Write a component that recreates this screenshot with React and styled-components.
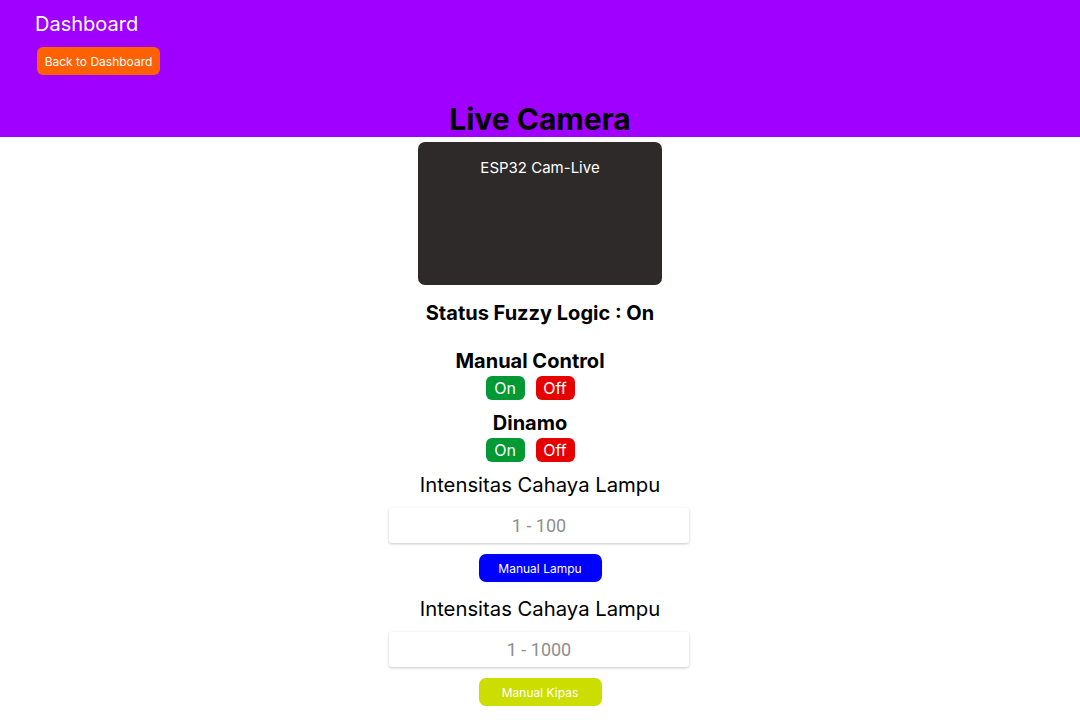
import React from 'react';
import styled, { createGlobalStyle } from 'styled-components';

const GlobalStyle = createGlobalStyle`
  html, body { margin: 0; padding: 0; background: #fff; }
  body { font-family: 'Inter', 'Liberation Sans', sans-serif; }
  * { box-sizing: border-box; }
`;

const Header = styled.header`
  background: #a000ff;
  height: 137px;
  display: flex;
  flex-direction: column;
  padding: 12px 0 0 35px;
`;

const Brand = styled.div`
  color: #fff;
  font-size: 20px;
  line-height: 24px;
`;

const BackButton = styled.button`
  align-self: flex-start;
  margin: 11px 0 0 2px;
  background: #ff6000;
  color: #fff;
  border: none;
  border-radius: 6px;
  height: 28px;
  width: 123px;
  padding: 0;
  font-family: inherit;
  font-size: 12px;
`;

const PageTitle = styled.h1`
  margin: auto 35px 0 0;
  text-align: center;
  font-size: 30px;
  line-height: 36px;
  font-weight: 700;
  color: #000;
`;

const Main = styled.main`
  display: flex;
  flex-direction: column;
  align-items: center;
`;

const CameraBox = styled.div`
  margin-top: 5px;
  width: 244px;
  height: 143px;
  background: #2e2a29;
  border-radius: 7px;
  color: #fff;
  font-size: 15px;
  text-align: center;
  padding-top: 16px;
`;

const ControlGroup = styled.section`
  display: flex;
  flex-direction: column;
  align-items: center;
  padding-right: 20px;
`;

const Heading = styled.h2`
  margin: ${p => p.$top}px 0 0;
  font-size: ${p => (p.$light ? '20.3px' : '20px')};
  line-height: 24px;
  font-weight: ${p => (p.$light ? 400 : 700)};
  color: #000;
`;

const Toggles = styled.div`
  display: flex;
  gap: 11px;
  margin-top: 3px;
`;

const Toggle = styled.button`
  width: 39px;
  height: 24px;
  border: none;
  border-radius: 6px;
  padding: 0;
  color: #fff;
  font-family: inherit;
  font-size: 16px;
  background: ${p => (p.$on ? '#009933' : '#e60000')};
`;

const RangeInput = styled.input`
  margin: 11px 2px 0 0;
  width: 300px;
  height: 35px;
  border: none;
  border-radius: 3px;
  background: #fff;
  box-shadow: 0 1px 3px rgba(0, 0, 0, 0.22);
  text-align: center;
  font-family: 'Roboto', sans-serif;
  font-size: 18px;
  outline: none;
  &::placeholder { color: #8f8f8f; }
`;

const ActionButton = styled.button`
  margin-top: 11px;
  width: 123px;
  height: 28px;
  border: none;
  border-radius: 7px;
  padding: 0;
  color: #fff;
  font-family: inherit;
  font-size: 12px;
  background: ${p => p.$color};
`;

function OnOff() {
  return (
    <Toggles>
      <Toggle $on>On</Toggle>
      <Toggle>Off</Toggle>
    </Toggles>
  );
}

export default function App() {
  return (
    <>
      <GlobalStyle />
      <Header>
        <Brand>Dashboard</Brand>
        <BackButton>Back to Dashboard</BackButton>
        <PageTitle>Live Camera</PageTitle>
      </Header>
      <Main>
        <CameraBox>ESP32 Cam-Live</CameraBox>
        <Heading $top={16}>Status Fuzzy Logic : On</Heading>
        <ControlGroup>
          <Heading $top={24}>Manual Control</Heading>
          <OnOff />
          <Heading $top={11}>Dinamo</Heading>
          <OnOff />
        </ControlGroup>
        <Heading $top={11} $light>Intensitas Cahaya Lampu</Heading>
        <RangeInput placeholder="1 - 100" />
        <ActionButton $color="#0000ff">Manual Lampu</ActionButton>
        <Heading $top={15} $light>Intensitas Cahaya Lampu</Heading>
        <RangeInput placeholder="1 - 1000" />
        <ActionButton $color="#ccdd00">Manual Kipas</ActionButton>
      </Main>
    </>
  );
}
